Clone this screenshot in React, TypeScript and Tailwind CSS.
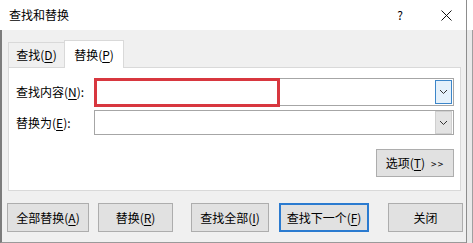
import React from "react";

const font = { fontFamily: '"Noto Sans CJK SC", "Noto Sans", sans-serif' };

function U({ c }: { c: string }) {
  return <span className="underline underline-offset-2 decoration-[1px]">{c}</span>;
}

function Chevron() {
  return (
    <svg width="9" height="6" viewBox="0 0 9 6" fill="none">
      <path d="M1 1 L4.5 4.5 L8 1" stroke="#333" strokeWidth="1" />
    </svg>
  );
}

function Btn({ children, w, active }: { children: React.ReactNode; w: string; active?: boolean }) {
  return (
    <div
      className={`${w} h-[29px] flex items-center justify-center bg-[#e1e1e1] text-[12px] text-black ${
        active ? "border-2 border-[#2b7bd0]" : "border border-[#adadad]"
      }`}
    >
      {children}
    </div>
  );
}

export default function App() {
  return (
    <div className="w-[473px] h-[243px] flex bg-white overflow-hidden text-black" style={font}>
      <div className="w-[467px] h-full flex flex-col border-r border-[#8d8d8d]">
        {/* title bar */}
        <div className="h-[30px] flex items-center bg-white pl-[9px] pr-[14px]">
          <span className="text-[12px] leading-none">查找和替换</span>
          <span className="ml-auto text-[12px] leading-none mr-[38px]">?</span>
          <svg width="11" height="11" viewBox="0 0 11 11">
            <path d="M0.5 0.5 L10.5 10.5 M10.5 0.5 L0.5 10.5" stroke="#111" strokeWidth="1" />
          </svg>
        </div>
        {/* body */}
        <div className="flex-1 bg-[#f0f0f0] border-l-2 border-[#7c7c7c] border-b border-b-[#9a9a9a] flex flex-col pl-[6px]">
          {/* tabs */}
          <div className="flex items-end h-[37px]">
            <div className="w-[56px] h-[25px] border-t border-l border-[#d9d9d9] bg-[#f0f0f0] flex items-center justify-center text-[12px]">
              查找(<U c="D" />)
            </div>
            <div className="relative z-10 w-[60px] h-[28px] -mb-px border-t border-l border-r border-[#d9d9d9] bg-white flex items-center justify-center text-[12px]">
              替换(<U c="P" />)
            </div>
          </div>
          {/* panel */}
          <div className="w-[453px] h-[124px] bg-white border border-[#d9d9d9] pl-[7px] pt-[10px] relative">
            <div className="flex items-center h-[28px]">
              <span className="w-[78px] text-[12px]">
                查找内容(<U c="N" />):
              </span>
              <div className="w-[360px] h-[28px] border border-[#a6a6a6] bg-white flex justify-end items-center pr-[1px]">
                <div className="w-[17px] h-[24px] bg-[#e5f1fb] border border-[#3c86c9] flex items-center justify-center">
                  <Chevron />
                </div>
              </div>
            </div>
            <div className="flex items-center h-[25px] mt-[4px]">
              <span className="w-[78px] text-[12px]">
                替换为(<U c="E" />):
              </span>
              <div className="w-[360px] h-[25px] border border-[#a6a6a6] bg-white flex justify-end items-center pr-[1px]">
                <div className="w-[17px] h-[23px] bg-[#e3e3e3] border border-[#cfcfcf] flex items-center justify-center">
                  <Chevron />
                </div>
              </div>
            </div>
            <div className="flex justify-end pr-[6px] mt-[14px]">
              <div className="w-[78px] h-[28px] bg-[#e1e1e1] border border-[#adadad] flex items-center justify-center text-[12px] gap-[6px]">
                <span>
                  选项(<U c="T" />)
                </span>
                <span className="text-[10px] tracking-[1px]">&gt;&gt;</span>
              </div>
            </div>
            {/* red annotation */}
            <div className="absolute left-[85px] top-[10px] w-[186px] h-[29px] border-[3px] border-[#d8373f]" />
          </div>
          {/* buttons */}
          <div className="flex items-center mt-[12px] ml-[-1px]">
            <Btn w="w-[82px]">
              全部替换(<U c="A" />)
            </Btn>
            <div className="w-[9px]" />
            <Btn w="w-[75px]">
              替换(<U c="R" />)
            </Btn>
            <div className="w-[18px]" />
            <Btn w="w-[78px]">
              查找全部(<U c="I" />)
            </Btn>
            <div className="w-[10px]" />
            <Btn w="w-[90px]" active>
              查找下一个(<U c="F" />)
            </Btn>
            <div className="w-[19px]" />
            <Btn w="w-[75px]">关闭</Btn>
          </div>
        </div>
      </div>
      <div className="flex-1 flex flex-col">
        <div className="h-[30px] bg-white" />
        <div className="flex-1 bg-[#e9e9e9] border-r border-[#a0a0a0]" />
      </div>
    </div>
  );
}
